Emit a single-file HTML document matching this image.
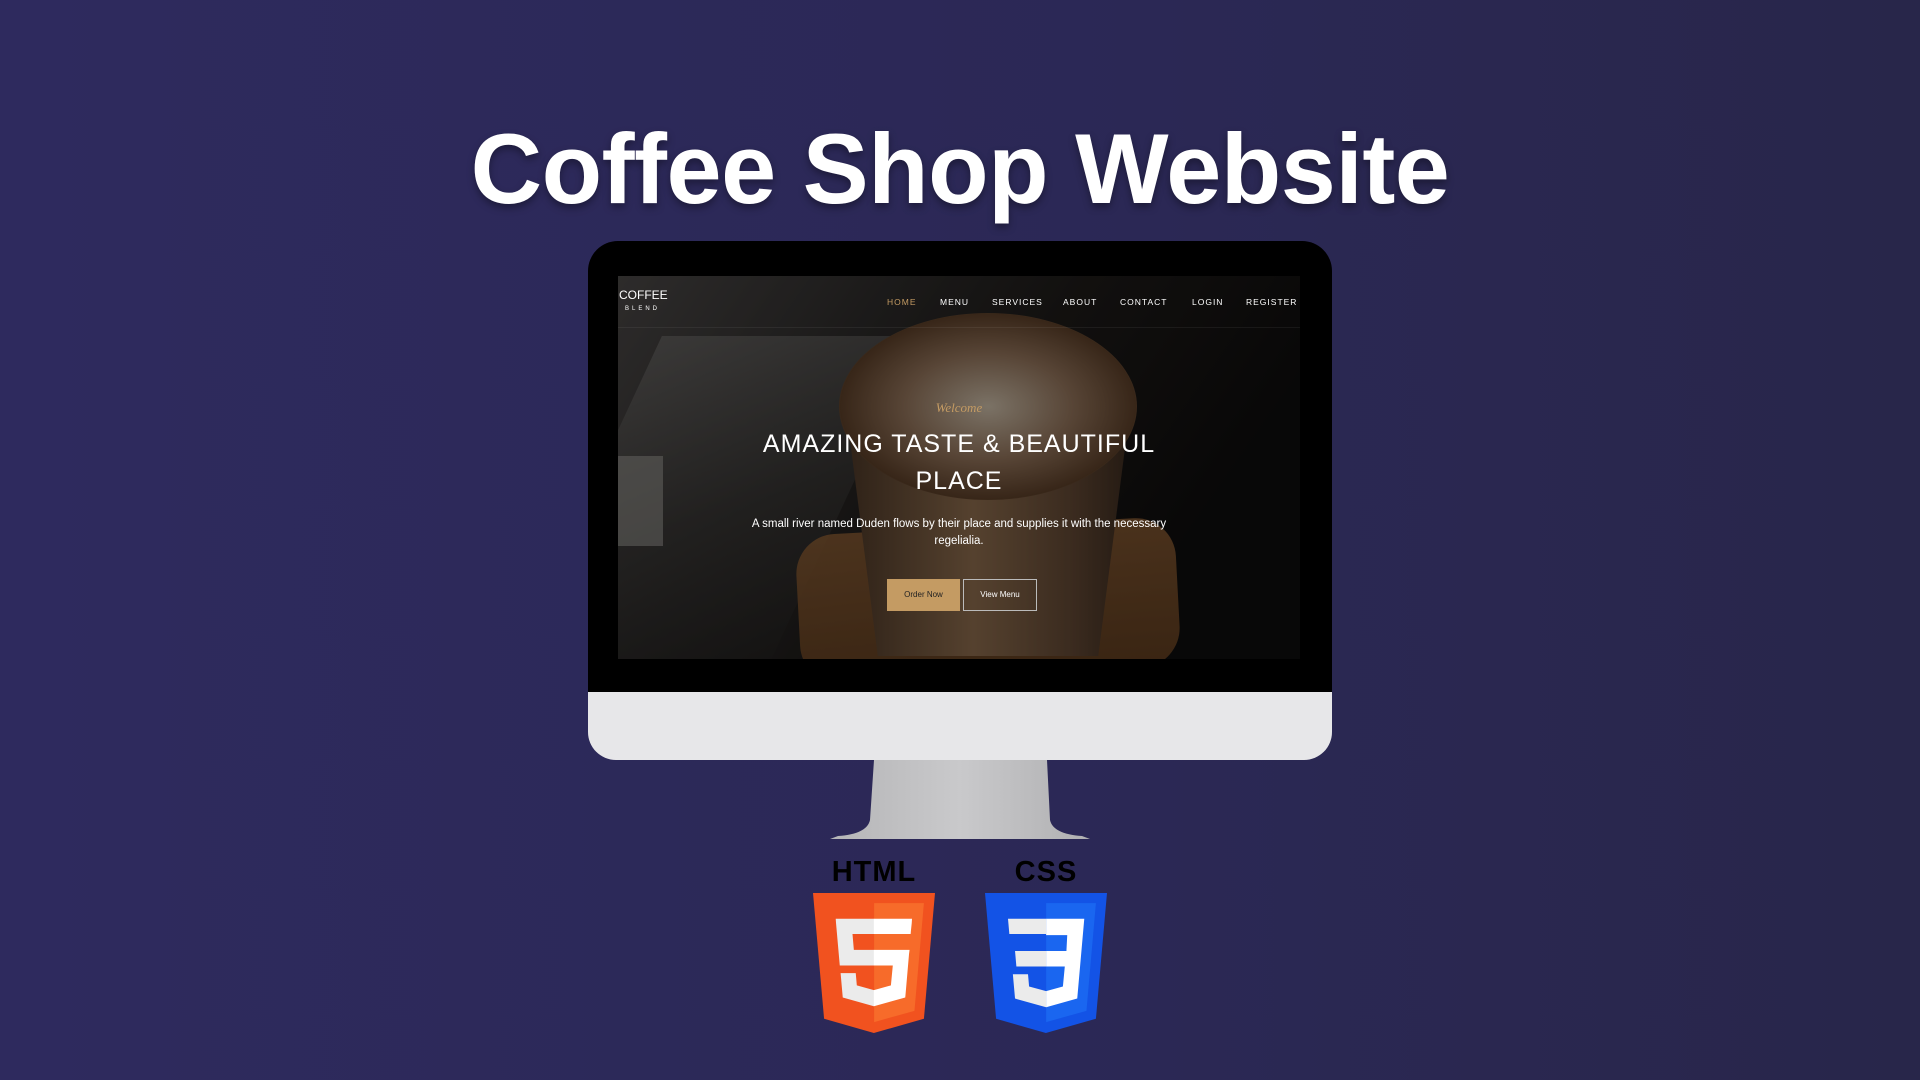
<!DOCTYPE html>
<html><head><meta charset="utf-8"><style>
*{margin:0;padding:0;box-sizing:border-box}
body{width:1920px;height:1080px;overflow:hidden;position:relative;background:linear-gradient(90deg,#2e2a5e 0%,#2b2855 60%,#28264a 100%);font-family:"Liberation Sans",sans-serif}
.title{position:absolute;left:0;width:1920px;top:112px;text-align:center;color:#fff;font-weight:bold;font-size:99px;letter-spacing:-0.5px;text-shadow:0 4px 8px rgba(0,0,0,.35)}
.bezel{position:absolute;left:588px;top:241px;width:744px;height:452px;background:#000;border-radius:30px 30px 0 0}
.chin{position:absolute;left:588px;top:692px;width:744px;height:68px;background:#e7e7e9;border-radius:0 0 28px 28px}
.screen{position:absolute;left:618px;top:276px;width:682px;height:383px;overflow:hidden;background:#1a1512}
.a{position:absolute}
.nav{position:absolute;top:21px;color:#fff;font-size:8.5px;letter-spacing:1px}
</style></head><body>
<div class="title">Coffee Shop Website</div>
<div class="bezel"></div>
<div class="screen">
 <div class="a" style="inset:0;background:linear-gradient(125deg,#4a4746 0%,#2c2a29 30%,#1d1a18 50%,#0e0d0d 80%)"></div>
 <div class="a" style="left:-40px;top:60px;width:260px;height:360px;background:linear-gradient(160deg,#6a6866,#3a3836 50%,#1e1c1b);transform:skewX(-25deg);opacity:.7"></div>
 <div class="a" style="left:0;top:180px;width:45px;height:90px;background:#9a9893;opacity:.6"></div>
 <div class="a" style="left:180px;top:250px;width:380px;height:150px;background:linear-gradient(180deg,#8a5c33,#6b4422);border-radius:40px;transform:rotate(-3deg);opacity:.85"></div>
 <div class="a" style="left:225px;top:110px;width:290px;height:270px;background:linear-gradient(90deg,#4a3626,#8a6a4c 45%,#5e4532 80%,#3a2a1e);clip-path:polygon(0 0,100% 0,88% 100%,12% 100%)"></div>
 <div class="a" style="left:221px;top:37px;width:298px;height:187px;border-radius:50%;background:radial-gradient(ellipse at 50% 50%,#c7b9a5 0%,#8e7058 40%,#5a3e28 70%,#bfa68a 88%,#d9c9b4 100%)"></div>
 <div class="a" style="inset:0;background:rgba(0,0,0,.38)"></div>
 <div class="a" style="left:0;top:0;width:682px;height:52px;border-bottom:1px solid rgba(255,255,255,.06)"></div>
 <div class="a" style="left:1px;top:14px;color:#fff;font-size:12px;line-height:11px">COFFEE<br><span style="font-size:6px;letter-spacing:3px;margin-left:6px">BLEND</span></div>
 <div class="nav" style="left:269px;color:#c49b63">HOME</div>
 <div class="nav" style="left:322px">MENU</div>
 <div class="nav" style="left:374px">SERVICES</div>
 <div class="nav" style="left:445px">ABOUT</div>
 <div class="nav" style="left:502px">CONTACT</div>
 <div class="nav" style="left:574px">LOGIN</div>
 <div class="nav" style="left:628px">REGISTER</div>
 <div class="a" style="left:0;width:682px;top:124px;text-align:center;color:#c49b63;font-family:'Liberation Serif',serif;font-style:italic;font-size:13px">Welcome</div>
 <div class="a" style="left:0;width:682px;top:150px;text-align:center;color:#fff;font-size:25px;line-height:37px;letter-spacing:1px">AMAZING TASTE &amp; BEAUTIFUL<br>PLACE</div>
 <div class="a" style="left:0;width:682px;top:240px;text-align:center;color:#fff;font-size:11.5px;line-height:17px">A small river named Duden flows by their place and supplies it with the necessary<br>regelialia.</div>
 <div class="a" style="left:269px;top:303px;width:73px;height:32px;background:#c49b63;color:#222;font-size:8px;text-align:center;line-height:32px">Order Now</div>
 <div class="a" style="left:345px;top:303px;width:74px;height:32px;border:1px solid #bbb;color:#fff;font-size:8px;text-align:center;line-height:30px">View Menu</div>
</div>
<div class="chin"></div>
<svg class="a" style="left:820px;top:758px" width="280" height="84" viewBox="0 0 280 84">
 <defs><linearGradient id="st" x1="0" x2="1"><stop offset="0" stop-color="#b5b5b7"/><stop offset=".5" stop-color="#c9c9cb"/><stop offset="1" stop-color="#b0b0b2"/></linearGradient></defs>
 <path d="M54,2 L227,2 L230,62 Q233,76 262,78 L270,81 L10,81 L18,78 Q47,76 50,62 Z" fill="url(#st)"/>
</svg>
<div class="a" style="left:813px;top:856px;width:122px;text-align:center;font-weight:900;font-size:29px;color:#000;letter-spacing:1px">HTML</div>
<div class="a" style="left:985px;top:856px;width:122px;text-align:center;font-weight:900;font-size:29px;color:#000;letter-spacing:1px">CSS</div>
<svg class="a" style="left:813px;top:893px" width="122" height="140" viewBox="30 0 451 512" preserveAspectRatio="none">
 <path d="M71,460L30,0h451l-41,460l-185,52z" fill="#f1521f"/>
 <path d="M256,472l149-41l35-394h-184z" fill="#f76b2a"/>
 <path d="M256,208h-75l-5-58h80V94H114l1,15 14,156h127zM256,355h-1l-63-17-4-45h-56l8,89 115,32h1z" fill="#ebebeb"/>
 <path d="M255,208v57h70l-7,73-63,17v59l116-32 1-10 13-149 2-15h-15zM255,94v56h136l1-12 3-28 1-16z" fill="#fff"/>
</svg>
<svg class="a" style="left:985px;top:893px" width="122" height="140" viewBox="30 0 451 512" preserveAspectRatio="none">
 <path d="M71,460L30,0h451l-41,460l-185,52z" fill="#1353e6"/>
 <path d="M256,472l149-41l35-394h-184z" fill="#1a66f0"/>
 <path d="M256,94H115l5,56h136zM256,212H141l5,57h110zM256,359l-63-17-4-45h-56l8,89 115,32z" fill="#ebebeb"/>
 <path d="M256,94h141l-17,191-9,101-115,32v-59l62-17 7-73h-69v-57h75l3-58h-78z" fill="#fff"/>
</svg>
</body></html>
